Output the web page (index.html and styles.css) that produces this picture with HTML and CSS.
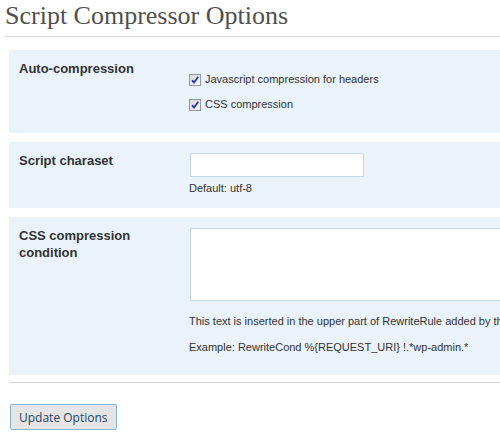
FILE: index.html
```html
<!DOCTYPE html>
<html>
<head>
<meta charset="utf-8">
<link rel="stylesheet" href="styles.css">
</head>
<body>
<div class="wrap">
  <h2 class="title">Script Compressor Options</h2>
  <form class="form">
    <div class="form-table">
      <div class="row">
        <div class="row-label">Auto-compression</div>
        <div class="row-field">
          <div class="checklist">
            <label class="check">
              <span class="cb"><svg width="10" height="10" viewBox="0 0 10 10"><path d="M2 5.2 L4 7.6 L8.2 1.8" fill="none" stroke="#2a3c9c" stroke-width="1.8"/></svg></span>
              <span class="check-text">Javascript compression for headers</span>
            </label>
            <label class="check">
              <span class="cb"><svg width="10" height="10" viewBox="0 0 10 10"><path d="M2 5.2 L4 7.6 L8.2 1.8" fill="none" stroke="#2a3c9c" stroke-width="1.8"/></svg></span>
              <span class="check-text">CSS compression</span>
            </label>
          </div>
        </div>
      </div>
      <div class="row">
        <div class="row-label">Script charaset</div>
        <div class="row-field">
          <input class="text-input" type="text" value="">
          <p class="desc desc-charset">Default: utf-8</p>
        </div>
      </div>
      <div class="row">
        <div class="row-label">CSS compression condition</div>
        <div class="row-field">
          <textarea class="text-area"></textarea>
          <p class="desc desc-first">This text is inserted in the upper part of RewriteRule added by this plugin in your .htaccess file.</p>
          <p class="desc desc-last">Example: RewriteCond %{REQUEST_URI} !.*wp-admin.*</p>
        </div>
      </div>
    </div>
    <div class="divider"></div>
    <div class="submit">
      <button type="button" class="button">Update Options</button>
    </div>
  </form>
</div>
</body>
</html>
```
FILE: styles.css
```css
html, body {
  margin: 0;
  padding: 0;
  overflow: hidden;
  background: #fff;
}
body {
  font-family: "Liberation Sans", Arial, sans-serif;
  color: #333;
}
.wrap {
  width: 760px;
  padding-left: 5px;
}
.title {
  margin: 0;
  padding: 1px 0 6px;
  font-family: "Liberation Serif", Georgia, serif;
  font-weight: normal;
  font-size: 26px;
  line-height: 29px;
  color: #505050;
  border-bottom: 1px solid #dadada;
}
.form {
  margin: 0;
}
.form-table {
  display: flex;
  flex-direction: column;
  gap: 9px;
  margin: 13px 0 0 4px;
}
.row {
  display: flex;
  background: #eaf2fa;
}
.row-label {
  flex: none;
  width: 151px;
  padding: 10px;
  font-size: 13px;
  line-height: 17px;
  font-weight: bold;
  color: #333;
}
.row-field {
  flex: 1;
  padding: 10px;
  font-size: 11px;
  line-height: 14px;
}
.checklist {
  display: flex;
  flex-direction: column;
  gap: 11px;
  margin: 12px 0 12px -1px;
}
.check {
  display: flex;
  align-items: flex-start;
  height: 14px;
}
.cb {
  box-sizing: border-box;
  width: 12px;
  height: 12px;
  margin-top: 2px;
  margin-right: 4px;
  border: 1px solid #8f9aa6;
  background: linear-gradient(135deg, #d6d6d6, #f8f8f8);
  display: flex;
  align-items: center;
  justify-content: center;
}
.cb svg {
  display: block;
}
.check-text {
  color: #333;
}
.text-input {
  display: block;
  box-sizing: border-box;
  width: 174px;
  height: 24px;
  margin: 1px 0 0;
  border: 1px solid #c6d9e9;
  background: #fff;
  padding: 2px 4px;
  outline: none;
}
.desc {
  margin: 0;
  color: #333;
  white-space: nowrap;
}
.desc-charset {
  margin: 4px 0 3px -1px;
}
.text-area {
  display: block;
  box-sizing: border-box;
  width: 520px;
  height: 73px;
  margin: 1px 0 0;
  border: 1px solid #c6d9e9;
  background: #fff;
  resize: none;
  outline: none;
}
.desc-first {
  margin: 13px 0 0 -1px;
}
.desc-last {
  margin: 12px 0 11px -1px;
}
.divider {
  margin: 7px 0 0 4px;
  border-top: 1px solid #cfcfcf;
}
.submit {
  padding: 21px 0 0 5px;
}
.button {
  height: 26px;
  padding: 0 8px;
  font-family: "Open Sans", "Noto Sans", sans-serif;
  font-size: 12px;
  color: #246;
  background: #e5e5e5;
  border: 1px solid #80b5d0;
  border-radius: 2px;
  cursor: pointer;
}
```
